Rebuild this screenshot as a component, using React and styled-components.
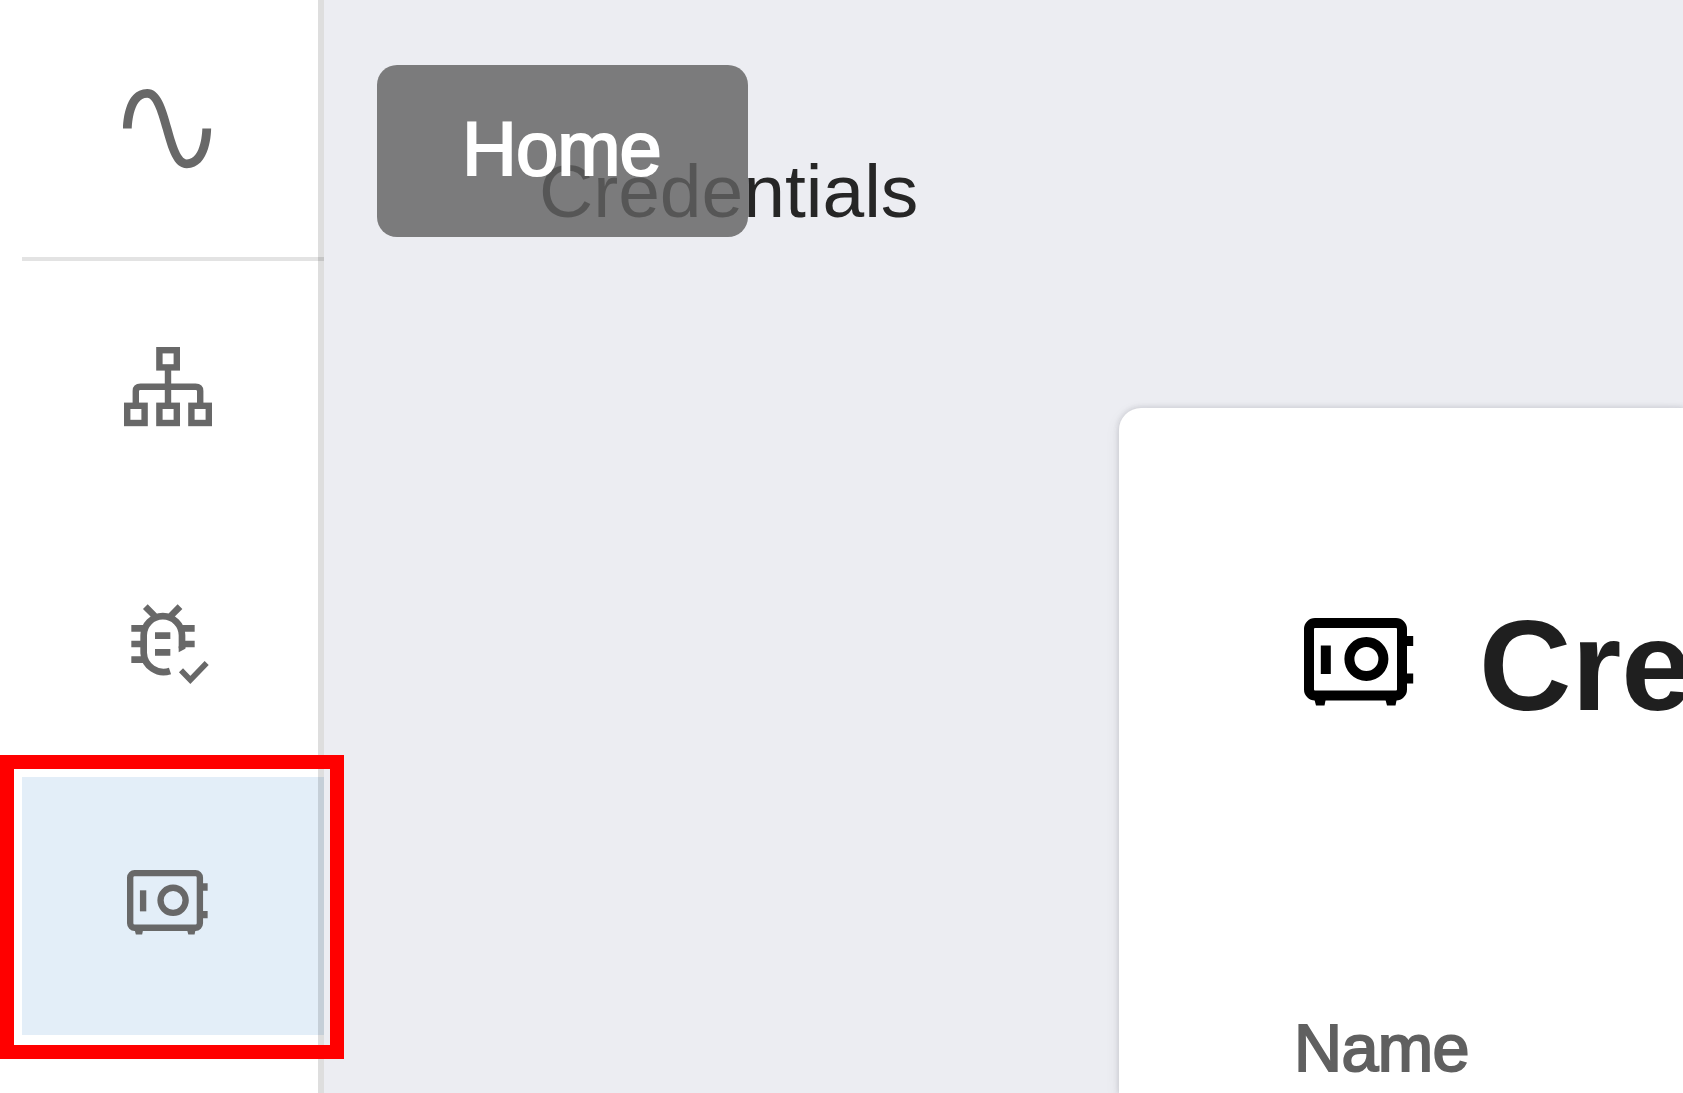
import React from 'react';
import styled, { createGlobalStyle } from 'styled-components';

const GlobalStyle = createGlobalStyle`
  * { box-sizing: border-box; }
  body {
    margin: 0;
    overflow: hidden;
    font-family: "Liberation Sans", Arial, sans-serif;
  }
`;

const Page = styled.div`
  position: relative;
  display: flex;
  width: 1683px;
  height: 1093px;
  overflow: hidden;
  background: #ecedf2;
`;

const Sidebar = styled.nav`
  display: flex;
  flex-direction: column;
  flex: none;
  width: 324px;
  padding-left: 22px;
  background: #fff;
`;

const NavItem = styled.div`
  display: flex;
  align-items: center;
  justify-content: center;
  flex: none;
  height: ${(p) => p.$height || 258}px;
  padding: ${(p) => p.$pad || '0'};
  background: ${(p) => (p.$active ? '#e3eef8' : 'transparent')};
  border-right: 6px solid rgba(0, 0, 0, 0.13);
  color: #686868;
`;

const Divider = styled.div`
  flex: none;
  height: 4px;
  background: #e3e3e3;
  border-right: 6px solid rgba(0, 0, 0, 0.13);
`;

const NavRest = styled.div`
  flex: 1;
  border-right: 6px solid rgba(0, 0, 0, 0.13);
`;

const Icon = styled.svg`
  display: block;
  flex: none;
  overflow: visible;
`;

const Main = styled.main`
  display: flex;
  flex-direction: column;
  flex: 1;
  min-width: 0;
`;

const Breadcrumb = styled.div`
  height: 408px;
  flex: none;
  padding: 154px 0 0 215px;
  font-size: 75px;
  line-height: 1;
  color: #262626;
`;

const Card = styled.section`
  flex: 1;
  margin-left: 795px;
  padding: 194px 0 0 185px;
  background: #fff;
  border-top-left-radius: 22px;
  box-shadow: 0 0 5px 1px rgba(50, 50, 60, 0.15), 0 4px 16px rgba(50, 50, 60, 0.07);
  overflow: hidden;
`;

const CardHeader = styled.div`
  display: flex;
  align-items: flex-start;
  gap: 66px;
  height: 128px;
  color: #000;

  svg { margin-top: 16px; }
`;

const Title = styled.h1`
  margin: 0;
  font-size: 128px;
  font-weight: 700;
  line-height: 1;
  white-space: nowrap;
  color: #1f1f1f;
`;

const ColumnLabel = styled.div`
  margin: 285px 0 0 -10px;
  font-size: 66.5px;
  letter-spacing: -0.6px;
  line-height: 1;
  white-space: nowrap;
  color: #606060;
  -webkit-text-stroke: 2px #606060;
`;

const Tooltip = styled.div`
  position: absolute;
  left: 377px;
  top: 65px;
  width: 371px;
  height: 172px;
  padding: 46px 0 0 85px;
  border-radius: 20px;
  background: rgba(98, 98, 98, 0.82);
  color: #fff;
  font-size: 76px;
  letter-spacing: -1px;
  line-height: 1;
  -webkit-text-stroke: 2px #fff;
`;

const Highlight = styled.div`
  position: absolute;
  left: 0;
  top: 755px;
  width: 344px;
  height: 304px;
  border: 14px solid #f00;
`;

const WaveIcon = () => (
  <Icon width="88" height="79.2" viewBox="2 3 20 18" fill="currentColor">
    <path d="M16.5,21C13.5,21 12.31,16.76 11.05,12.28C10.14,9.04 9,5 7.5,5C4.11,5 4,11.93 4,12H2C2,11.63 2.06,3 7.5,3C10.5,3 11.71,7.25 12.97,11.74C13.83,14.8 15,19 16.5,19C19.94,19 20.03,12.07 20.03,12H22.03C22.03,12.37 21.97,21 16.5,21Z" />
  </Icon>
);

const TreeIcon = () => (
  <Icon width="88" height="79" viewBox="0 0 88 79" fill="none" stroke="currentColor" strokeWidth="6.4">
    <rect x="35.4" y="3.2" width="17.4" height="17.2" />
    <rect x="3.2" y="58.8" width="17.4" height="17.2" />
    <rect x="35.4" y="58.8" width="17.4" height="17.2" />
    <rect x="67.4" y="58.8" width="17.4" height="17.2" />
    <path d="M44 23V56M11.8 56V44Q11.8 39.7 16.5 39.7H71.5Q76.2 39.7 76.2 44V56" />
  </Icon>
);

const BugIcon = () => (
  <Icon width="77" height="79" viewBox="96 46 231 237" fill="none" stroke="currentColor" strokeWidth="20">
    <path d="M213 244A60 60 0 0 1 134 190V137A57 57 0 0 1 249 137V176" />
    <path d="M239 170H259V177L239 188Z" fill="currentColor" stroke="none" />
    <path d="M139 51L167 79M243 51L215 79" />
    <path d="M97 116H136M97 163H134M97 210H138M246 116H287M249 163H287" />
    <path d="M168 138H214M168 188H214" />
    <path d="M246 242L274 271L323 220" strokeWidth="17" />
  </Icon>
);

const SafeIcon = ({ width, stroke }) => (
  <Icon width={width} height={(width * 88) / 109} viewBox="0 0 109 88" fill="none" stroke="currentColor" strokeWidth={stroke}>
    <rect x={stroke / 2} y={stroke / 2} width={103 - stroke} height={82.5 - stroke} rx="6" />
    <path d="M21.8 27.5V56" />
    <circle cx="62.4" cy="41" r="17" />
    <path d="M102 18H109.2V28H102ZM102 55.5H109.2V65.5H102ZM10 80H22L20.5 87.5H12ZM81 80H93L91.5 87.5H83Z" fill="currentColor" stroke="none" />
  </Icon>
);

export default function App() {
  return (
    <>
      <GlobalStyle />
      <Page>
        <Sidebar>
          <NavItem $height={257} $pad="0 6px 0 0"><WaveIcon /></NavItem>
          <Divider />
          <NavItem $pad="0 5px 7px 0"><TreeIcon /></NavItem>
          <NavItem $pad="0 1px 7px 0"><BugIcon /></NavItem>
          <NavItem $active $pad="0 5px 7px 0"><SafeIcon width={80.5} stroke={8.6} /></NavItem>
          <NavRest />
        </Sidebar>
        <Main>
          <Breadcrumb>Credentials</Breadcrumb>
          <Card>
            <CardHeader>
              <SafeIcon width={109} stroke={10} />
              <Title>Credentials</Title>
            </CardHeader>
            <ColumnLabel>Name</ColumnLabel>
          </Card>
        </Main>
        <Tooltip>Home</Tooltip>
        <Highlight />
      </Page>
    </>
  );
}
